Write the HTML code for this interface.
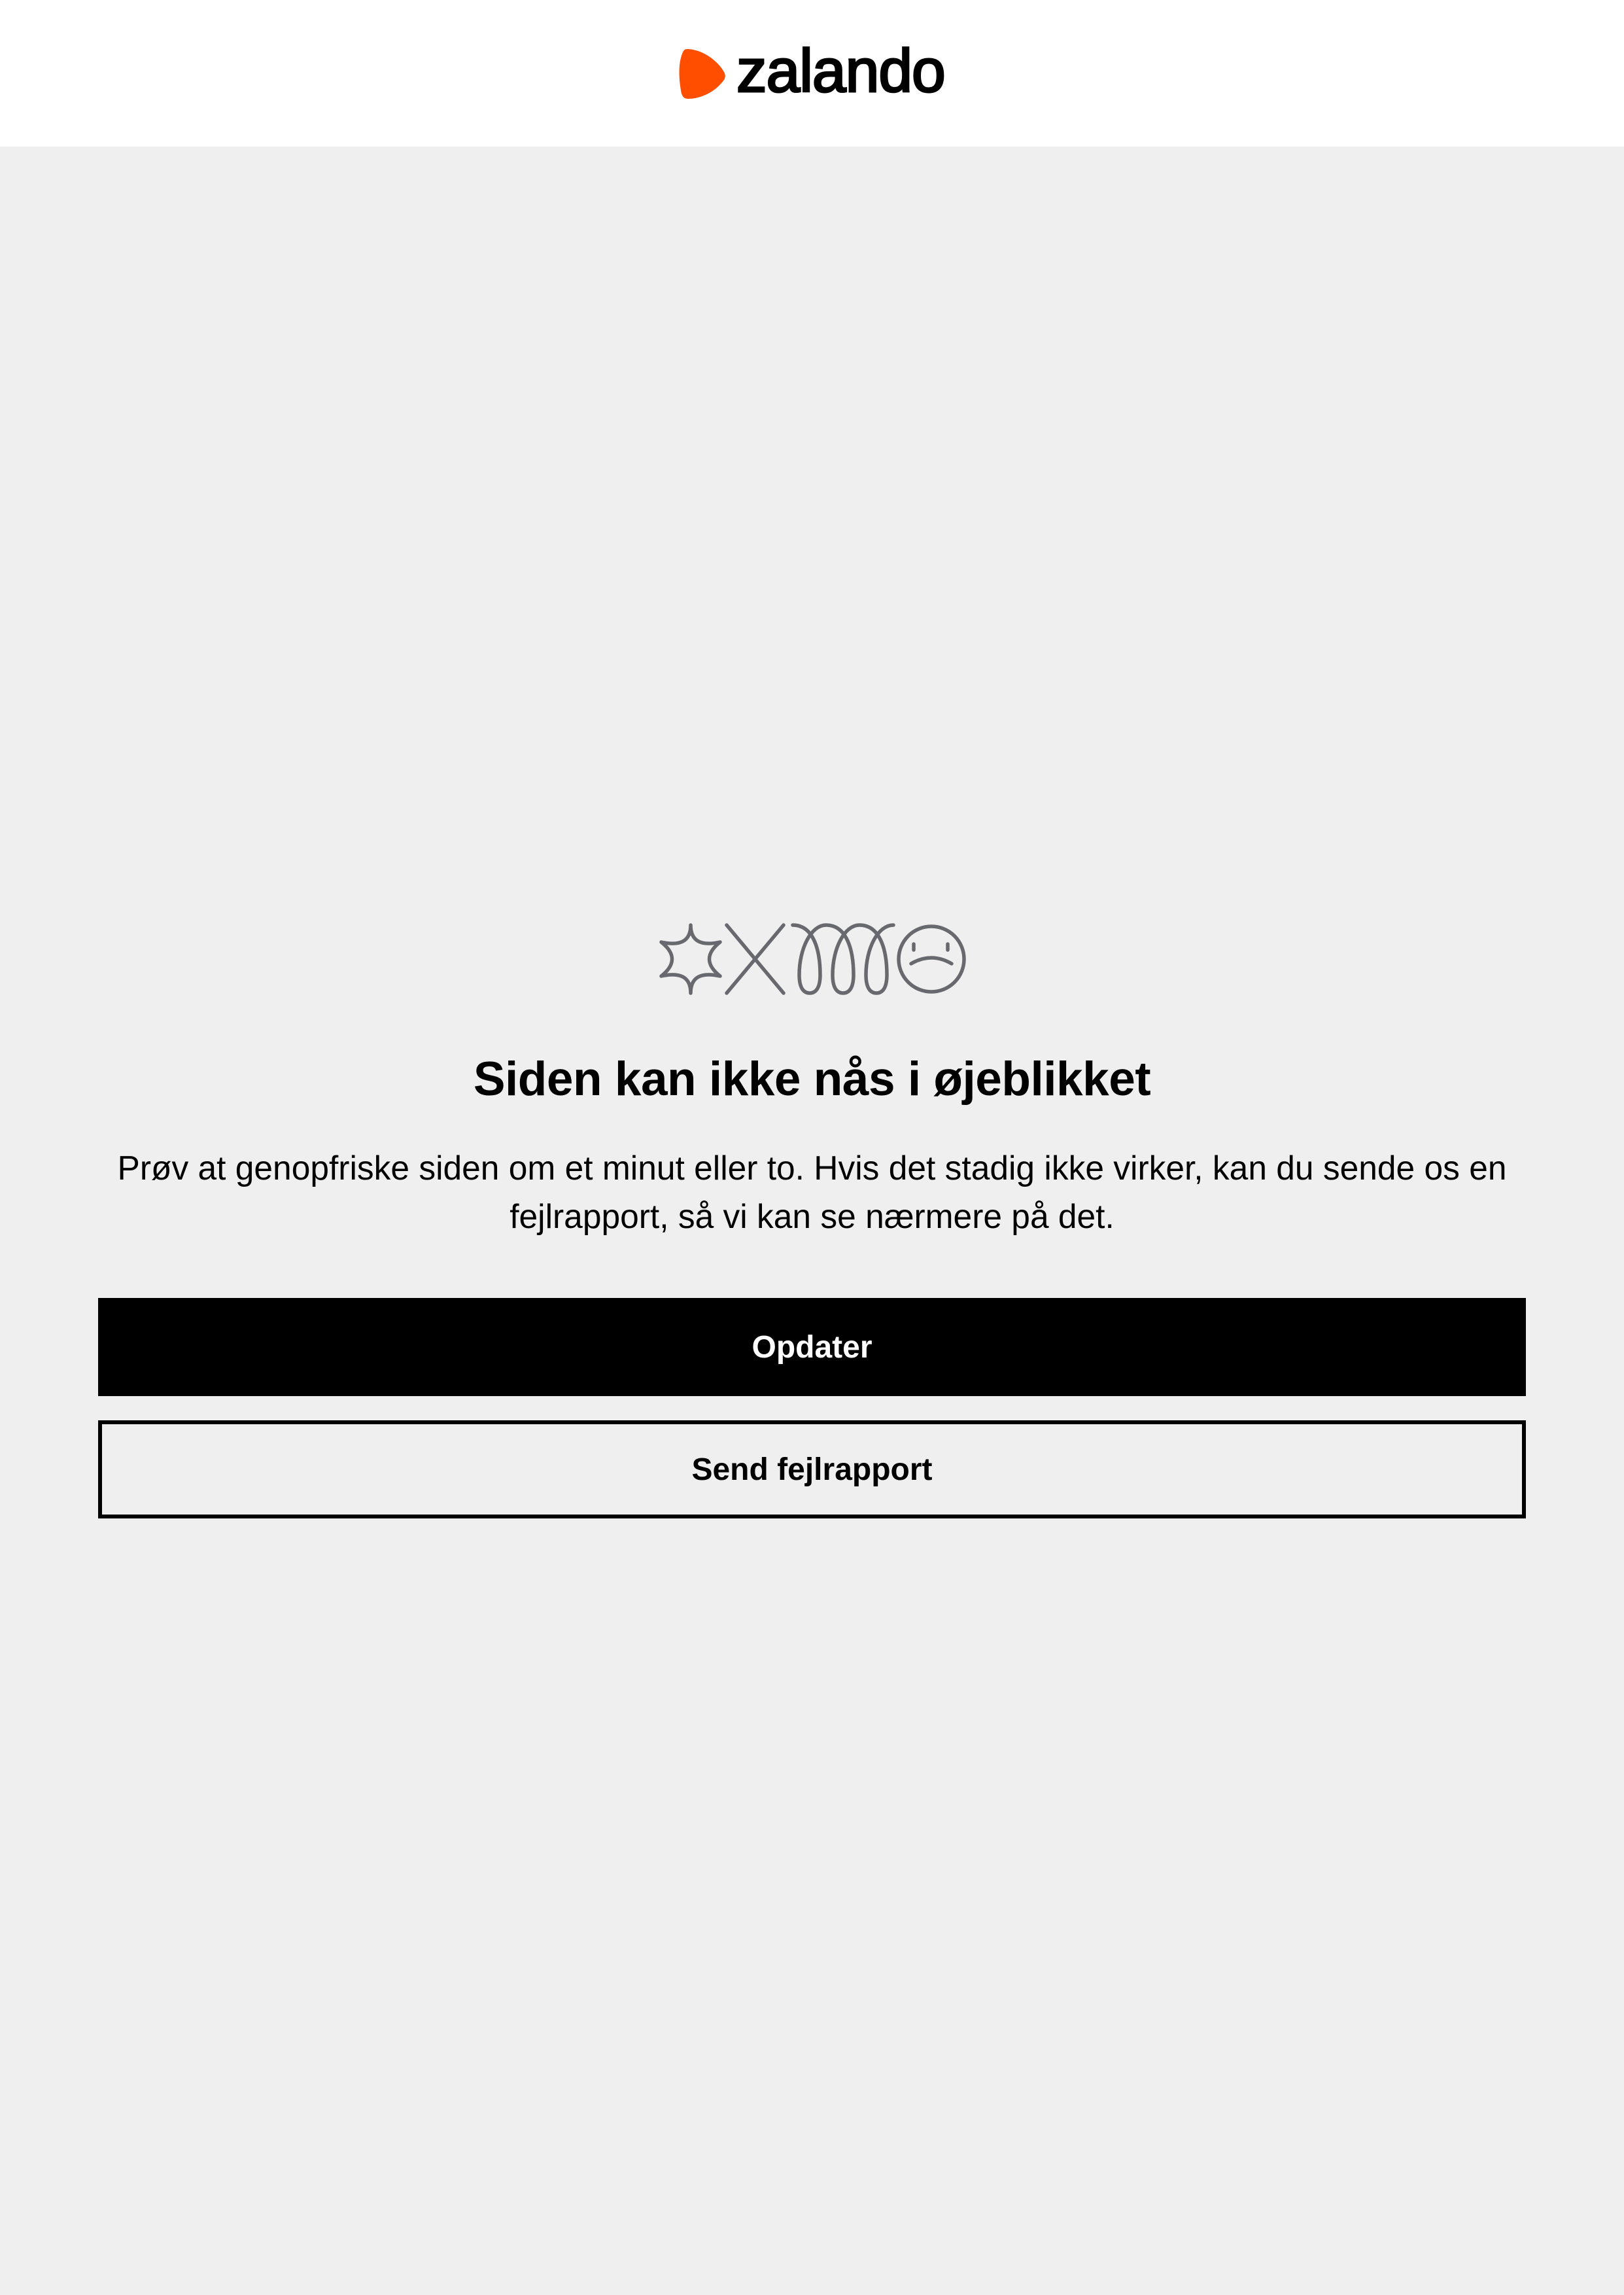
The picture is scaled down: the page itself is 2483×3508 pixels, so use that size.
<!DOCTYPE html>
<html><head><meta charset="utf-8"><style>
html,body{margin:0;padding:0;width:2483px;height:3508px;background:#efefef;font-family:"Liberation Sans",Arial,sans-serif;overflow:hidden}
.hdr{position:absolute;left:0;top:0;width:2483px;height:224px;background:#fff}
.logo{position:absolute;left:1126px;top:48px;font-size:93px;font-weight:normal;-webkit-text-stroke:3px #000;letter-spacing:-1px;color:#000;line-height:120px}
h1{position:absolute;left:0;width:2483px;top:1600px;margin:0;text-align:center;font-size:73px;font-weight:bold;line-height:100px;color:#000;letter-spacing:-0.5px}
p{position:absolute;left:100px;width:2283px;top:1748px;margin:0;text-align:center;font-size:51.5px;line-height:74px;color:#000}
.b{position:absolute;left:150px;width:2183px;height:150px;box-sizing:border-box;display:flex;align-items:center;justify-content:center;font-size:48px;font-weight:bold}
.b1{top:1984px;background:#000;color:#fff}
.b2{top:2171px;border:6px solid #000;color:#000}
</style></head><body>
<div class="hdr">
<svg style="position:absolute;left:0;top:0" width="1120" height="224"><path d="M1050,75 C1075,75 1100,95 1108,112 C1110,118 1108,122 1102,128 C1090,142 1070,151 1052,151 C1045,151 1042,146 1041,138 C1037,115 1038,95 1043,82 C1045,77 1047,75 1050,75Z" fill="#ff4e00"/></svg>
<div class="logo">zalando</div>
</div>
<svg style="position:absolute;left:0;top:0" width="2483" height="1600" fill="none" stroke="#68686f" stroke-width="5.5" stroke-linecap="round" stroke-linejoin="round">
<path d="M1056,1414 Q1056,1450 1101,1440 Q1068,1466 1101,1492 Q1056,1482 1056,1518 Q1056,1482 1011,1492 Q1044,1466 1011,1440 Q1056,1450 1056,1414Z"/>
<path d="M1111,1414 L1198,1518 M1198,1414 L1111,1518"/>
<path d="M1212,1414 C1245,1414 1254,1455 1254,1490 C1254,1512 1246,1518 1238,1518 C1230,1518 1222,1512 1222,1490 C1222,1450 1240,1414 1263,1414 C1296,1414 1305,1455 1305,1490 C1305,1512 1297,1518 1289,1518 C1281,1518 1273,1512 1273,1490 C1273,1450 1291,1414 1314,1414 C1347,1414 1356,1455 1356,1490 C1356,1512 1348,1518 1340,1518 C1332,1518 1324,1512 1324,1490 C1324,1450 1342,1414 1366,1414"/>
<circle cx="1424" cy="1466" r="50"/>
<path d="M1397,1443 L1397,1452 M1449,1443 L1449,1452 M1393,1473 Q1424,1455 1455,1473"/>
</svg>
<h1>Siden kan ikke nås i øjeblikket</h1>
<p>Prøv at genopfriske siden om et minut eller to. Hvis det stadig ikke virker, kan du sende os en fejlrapport, så vi kan se nærmere på det.</p>
<div class="b b1">Opdater</div>
<div class="b b2">Send fejlrapport</div>
</body></html>
